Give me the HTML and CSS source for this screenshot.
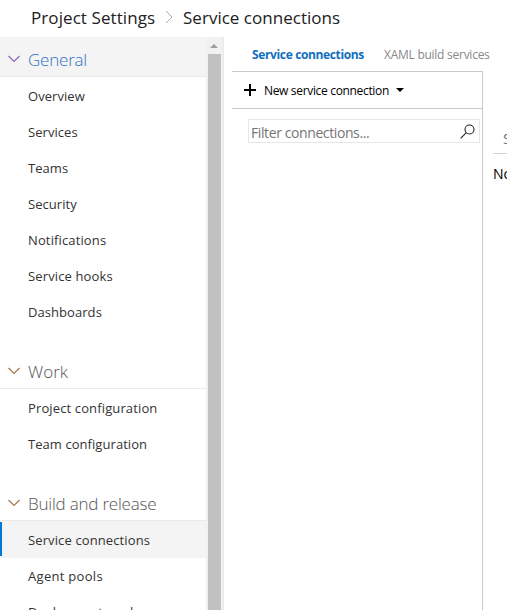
FILE: index.html
```html
<!DOCTYPE html>
<html lang="en">
<head>
<meta charset="utf-8">
<title>Project Settings</title>
<link rel="stylesheet" href="styles.css">
</head>
<body>
<header class="breadcrumb">
  <span class="crumb crumb-root">Project Settings</span>
  <svg class="crumb-arrow" width="8" height="14" viewBox="0 0 8 14"><path d="M1 1l6 6-6 6"/></svg>
  <span class="crumb crumb-page">Service connections</span>
</header>
<div class="workspace">
  <nav class="sidebar">
    <section class="group">
      <h2 class="group-title active"><svg class="chevron" width="12" height="8" viewBox="0 0 12 8"><path d="M.5 1l5.500 5.500L11.500 1"/></svg><span>General</span></h2>
      <ul class="items">
        <li>Overview</li>
        <li>Services</li>
        <li>Teams</li>
        <li>Security</li>
        <li class="wide">Notifications</li>
        <li class="wide">Service hooks</li>
        <li>Dashboards</li>
      </ul>
    </section>
    <section class="group">
      <h2 class="group-title work"><svg class="chevron" width="12" height="8" viewBox="0 0 12 8"><path d="M.5 1l5.500 5.500L11.500 1"/></svg><span>Work</span></h2>
      <ul class="items">
        <li class="wide">Project configuration</li>
        <li>Team configuration</li>
      </ul>
    </section>
    <section class="group">
      <h2 class="group-title"><svg class="chevron" width="12" height="8" viewBox="0 0 12 8"><path d="M.5 1l5.500 5.500L11.500 1"/></svg><span>Build and release</span></h2>
      <ul class="items">
        <li class="selected">Service connections</li>
        <li class="wider">Agent pools</li>
        <li>Deployment pools</li>
      </ul>
    </section>
  </nav>
  <div class="scrollbar">
    <svg class="scroll-up" width="8" height="4" viewBox="0 0 8 4"><path d="M0 4l4-4 4 4z"/></svg>
    <div class="thumb"></div>
  </div>
  <main class="content">
    <div class="tabs">
      <span class="tab current">Service connections</span>
      <span class="tab other">XAML build services</span>
    </div>
    <div class="panes">
      <div class="list-pane">
        <div class="toolbar">
          <svg width="12" height="12" viewBox="0 0 12 12"><path d="M5 0h2v5h5v2H7v5H5V7H0V5h5z"/></svg>
          <span class="new-label">New service connection</span>
          <svg class="caret" width="8" height="4" viewBox="0 0 8 4"><path d="M0 0h8L4 4z"/></svg>
        </div>
        <div class="filter">
          <span class="placeholder">Filter connections...</span>
          <svg class="search" width="15" height="15" viewBox="0 0 15 15"><circle cx="9.500" cy="5.500" r="4.500"/><path d="M6.300 8.700L.7 14.300"/></svg>
        </div>
      </div>
      <div class="detail-pane">
        <div class="detail-tabs">Services</div>
        <div class="message">No service connection selected</div>
      </div>
    </div>
  </main>
</div>
</body>
</html>
```
FILE: styles.css
```css
* { box-sizing: border-box; }
body {
  margin: 0;
  height: 610px;
  overflow: hidden;
  background: #fff;
  color: #333;
  font: 13px/18px "Open Sans", "Noto Sans", sans-serif;
  white-space: nowrap;
}
svg { display: block; flex: none; }
.breadcrumb {
  display: flex;
  align-items: center;
  height: 37px;
  padding-left: 31px;
  color: #212121;
  font-size: 17px;
  line-height: 36px;
}
.crumb { height: 37px; }
.crumb-root { width: 124px; letter-spacing: 0.08px; }
.crumb-page { letter-spacing: 0.02px; }
.crumb-arrow { margin: 0 10px 3px 10px; fill: none; stroke: #b5a9b8; }
.workspace { display: flex; height: 573px; overflow: hidden; }
.sidebar { width: 206px; flex: none; overflow: hidden; }
.group { margin-bottom: 19px; }
.group-title {
  display: flex;
  align-items: center;
  height: 40px;
  margin: 0 0 1px;
  padding: 6px 0 0 8px;
  border-bottom: 1px solid #eaeaea;
  color: #555;
  font-size: 17px;
  font-weight: 300;
  line-height: 24px;
  letter-spacing: -0.21px;
}
.group-title.active { background: #f4f4f4; color: #2f70c4; }
.group-title.work { letter-spacing: 0; }
.chevron { margin: 0 8px 1px 0; fill: none; stroke: #a07850; stroke-width: 1.2; }
.active .chevron { stroke: #8a68b8; }
.items { margin: 0; padding: 0; list-style: none; }
.items li { height: 36px; padding-left: 28px; line-height: 36px; letter-spacing: 0.06px; }
.items .wide { letter-spacing: 0.13px; }
.items .wider { letter-spacing: 0.3px; }
.items .selected {
  margin-top: -1px;
  height: 37px;
  padding-top: 1px;
  letter-spacing: 0.12px;
  background: linear-gradient(#0078d7, #0078d7) 0 1px / 2px 34px no-repeat #f4f4f4;
}
.scrollbar {
  width: 18px;
  flex: none;
  padding: 7px 0 0 2px;
  background: #f1f1f1;
  border-right: 1px solid #e8e8e8;
}
.scroll-up { margin: 0 0 6px 2px; fill: #a0a0a0; }
.thumb { width: 13px; height: 560px; background: #c1c1c1; }
.content { flex: 1; min-width: 0; padding-left: 8px; overflow: hidden; }
.tabs { display: flex; height: 34px; padding-left: 20px; font-size: 12px; line-height: 36px; }
.tab.current { width: 132px; color: #106ebe; font-weight: 700; letter-spacing: -0.36px; }
.tab.other { color: #888; letter-spacing: -0.26px; }
.panes { display: flex; height: 539px; }
.list-pane { width: 251px; flex: none; border-top: 1px solid #c8c8c8; border-right: 1px solid #c8c8c8; }
.toolbar {
  display: flex;
  align-items: center;
  height: 37px;
  padding-left: 12px;
  border-bottom: 1px solid #c8c8c8;
  color: #000;
  font-size: 12px;
}
.new-label { width: 125px; margin: 2px 7px 0 8px; letter-spacing: -0.33px; }
.filter {
  display: flex;
  align-items: center;
  justify-content: space-between;
  width: 232px;
  height: 24px;
  margin: 10px 0 0 16px;
  padding: 0 4px 0 2px;
  border: 1px solid #e6e6e6;
  color: #757575;
  font-size: 14px;
}
.placeholder { padding-top: 4px; letter-spacing: -0.4px; }
.search { margin-top: 1px; fill: none; stroke: #222; stroke-width: 1.1; }
.detail-pane { padding-left: 10px; color: #000; font-size: 14px; }
.detail-tabs { height: 83px; padding: 58px 0 0 10px; border-bottom: 1px solid #d2d2d2; color: #777; font-size: 15px; }
.message { padding-top: 11px; }
```
